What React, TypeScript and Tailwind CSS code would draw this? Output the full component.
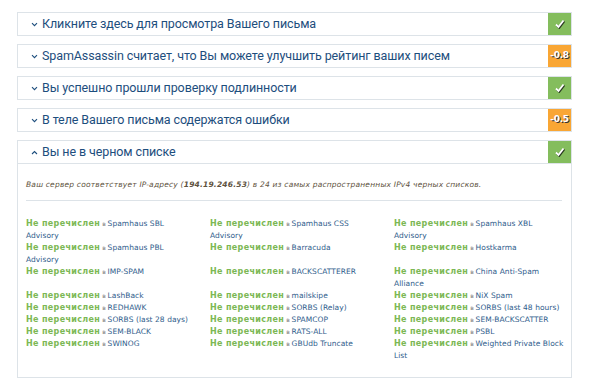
import React from "react";

const items: [string, string, string][] = [
  ["Spamhaus SBL Advisory", "Spamhaus CSS Advisory", "Spamhaus XBL Advisory"],
  ["Spamhaus PBL Advisory", "Barracuda", "Hostkarma"],
  ["IMP-SPAM", "BACKSCATTERER", "China Anti-Spam Alliance"],
  ["LashBack", "mailskipe", "NiX Spam"],
  ["REDHAWK", "SORBS (Relay)", "SORBS (last 48 hours)"],
  ["SORBS (last 28 days)", "SPAMCOP", "SEM-BACKSCATTER"],
  ["SEM-BLACK", "RATS-ALL", "PSBL"],
  ["SWINOG", "GBUdb Truncate", "Weighted Private Block List"],
];

function Chevron({ up }: { up?: boolean }) {
  return (
    <svg width="7" height="5" viewBox="0 0 7 5" className="shrink-0">
      {up ? (
        <path d="M1 4 L3.5 1.5 L6 4" fill="none" stroke="#1d4e7d" strokeWidth="1.1" />
      ) : (
        <path d="M1 1.2 L3.5 3.7 L6 1.2" fill="none" stroke="#1d4e7d" strokeWidth="1.1" />
      )}
    </svg>
  );
}

function Badge({ kind, value }: { kind: "ok" | "warn"; value?: string }) {
  if (kind === "ok") {
    return (
      <div className="w-[23px] self-stretch bg-[#84bd5d] flex items-center justify-center">
        <svg width="11" height="10" viewBox="0 0 11 10">
          <path d="M2 5.5 L4.5 8 L9.5 1.5" fill="none" stroke="#2b3a22" strokeWidth="2" transform="translate(0.8 0.8)" />
          <path d="M2 5.5 L4.5 8 L9.5 1.5" fill="none" stroke="#ffffff" strokeWidth="1.8" />
        </svg>
      </div>
    );
  }
  return (
    <div className="w-[23px] self-stretch bg-[#f9a634] flex items-center justify-center text-white text-[9px] font-bold [text-shadow:1px_1px_0_#333] [font-family:'DejaVu_Sans',sans-serif] tracking-[-0.3px]">
      {value}
    </div>
  );
}

function Header({ title, up, badge }: { title: string; up?: boolean; badge: React.ReactNode }) {
  return (
    <div className="h-[22px] flex items-stretch">
      <div className="flex-1 flex items-center pl-[13px] gap-[4px]">
        <Chevron up={up} />
        <span className="text-[12.5px] text-[#1d4e7d] [font-family:Roboto,sans-serif] tracking-[-0.1px]">{title}</span>
      </div>
      {badge}
    </div>
  );
}

function Card({ title, badge, up }: { title: string; badge: React.ReactNode; up?: boolean }) {
  return (
    <div className="border border-[#dde3e8] bg-white">
      <Header title={title} badge={badge} up={up} />
    </div>
  );
}

function Item({ name, last }: { name: string; last?: boolean }) {
  return (
    <div className={last ? "leading-[12px] text-[8px] [font-family:'DejaVu_Sans',sans-serif]" : "leading-[12px] text-[8px] [font-family:'DejaVu_Sans',sans-serif] pr-[12px]"}>
      <span className="text-[#7cb854] font-bold tracking-[0.35px]">Не перечислен</span>
      <span className="text-[#7a7a7a] text-[6px]"> в </span>
      <span className="text-[#2f5d8c] text-[7.5px] tracking-[0.05px]">{name}</span>
    </div>
  );
}

export default function App() {
  return (
    <div className="w-[590px] h-[383px] bg-white pt-[12px] pl-[17px] pr-[18px] flex flex-col gap-[8px]">
      <Card title="Кликните здесь для просмотра Вашего письма" badge={<Badge kind="ok" />} />
      <Card title="SpamAssassin считает, что Вы можете улучшить рейтинг ваших писем" badge={<Badge kind="warn" value="-0.8" />} />
      <Card title="Вы успешно прошли проверку подлинности" badge={<Badge kind="ok" />} />
      <Card title="В теле Вашего письма содержатся ошибки" badge={<Badge kind="warn" value="-0.5" />} />
      <div className="border border-[#dde3e8] bg-white">
        <div className="border-b border-[#dde3e8]">
          <Header title="Вы не в черном списке" up badge={<Badge kind="ok" />} />
        </div>
        <div className="pl-[8px] pr-[9px] pt-[15px] pb-[15px]">
          <div className="text-[7.5px] italic text-[#5e5240] leading-[12px] tracking-[0.2px] [font-family:'DejaVu_Sans',sans-serif] pb-[9px] border-b border-[#dde3e8]">
            Ваш сервер соответствует IP-адресу (<b>194.19.246.53</b>) в 24 из самых распространенных IPv4 черных списков.
          </div>
          <div className="grid grid-cols-[184px_184px_171px] pt-[17px]">
            {items.map((row, i) => (
              <React.Fragment key={i}>
                {row.map((n, j) => (
                  <Item key={n} name={n} last={j === 2} />
                ))}
              </React.Fragment>
            ))}
          </div>
        </div>
      </div>
    </div>
  );
}
